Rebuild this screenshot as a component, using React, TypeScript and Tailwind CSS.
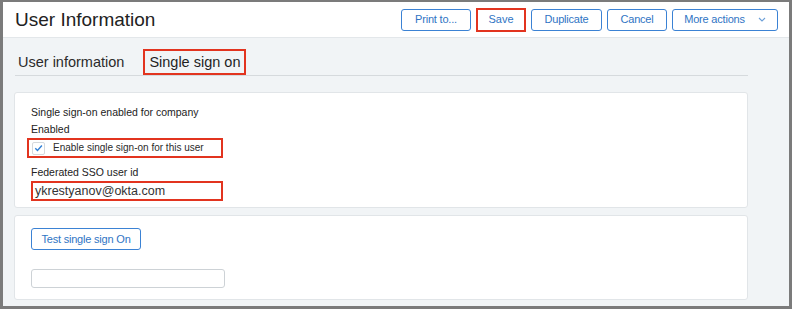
import type { ReactElement } from "react";

const blueButton = "flex h-[22px] items-center justify-center whitespace-nowrap rounded-[3px] border border-[#3b82d4] bg-white text-[11px] leading-none tracking-[-0.2px] text-[#2f74c4]";
const redBox = "border-2 border-[#e2341f]";
const labelText = "whitespace-nowrap text-[10.5px] leading-[16px] text-[#222]";

function Chevron(): ReactElement {
  return (
    <svg width="8" height="5" viewBox="0 0 8 5" className="ml-[13px]">
      <path d="M1 1l3 3 3-3" fill="none" stroke="#6b9fd8" strokeWidth="1.1" />
    </svg>
  );
}

function Check(): ReactElement {
  return (
    <svg width="12" height="12" viewBox="0 0 12 12">
      <path d="M2.5 6.3l2.4 2.4 4.8-5.4" fill="none" stroke="#2f7fd6" strokeWidth="1.5" />
    </svg>
  );
}

export default function App(): ReactElement {
  return (
    <div
      className="flex h-[309px] w-[792px] flex-col border-t-2 border-r-[3px] border-b-[3px] border-l-[3px] border-[#7b7b7b] bg-[#f1f4f6] text-[#2b2b2b]"
      style={{ fontFamily: '"Liberation Sans", Arial, sans-serif' }}
    >
      <header className="flex h-[36px] items-center justify-between border-b border-[#e3e7ea] bg-white pl-3 pr-[11px]">
        <h1 className="whitespace-nowrap text-[19px] leading-none text-[#222]">User Information</h1>
        <div className="flex items-center gap-[5px]">
          <button type="button" className={`${blueButton} w-[70px]`}>Print to...</button>
          <button type="button" className={`flex h-[24px] w-[50px] items-center justify-center bg-white text-[11px] leading-none text-[#2f74c4] ${redBox}`}>Save</button>
          <button type="button" className={`${blueButton} w-[71px]`}>Duplicate</button>
          <button type="button" className={`${blueButton} w-[60px]`}>Cancel</button>
          <button type="button" className={`${blueButton} w-[106px]`}>
            <span>More actions</span>
            <Chevron />
          </button>
        </div>
      </header>

      <div className="ml-3 mt-[11px] flex w-[733px] items-end border-b border-[#d6dadd]">
        <span className="whitespace-nowrap pb-[4px] pl-[3px] text-[14.5px] leading-[18px] text-[#2b2b2b]">User information</span>
        <span className={`ml-[19px] whitespace-nowrap px-[4px] py-[2px] text-[14.5px] leading-[18px] text-[#1f1f1f] ${redBox}`}>Single sign on</span>
      </div>

      <section className="ml-[11px] mt-[16px] flex h-[116px] w-[734px] flex-col items-start rounded-[3px] border border-[#e1e5e8] bg-white pl-4 pt-[11px]">
        <p className={labelText}>Single sign-on enabled for company</p>
        <p className={`mt-[1px] ${labelText}`}>Enabled</p>
        <label className={`-ml-[4px] mt-[1px] flex h-[20px] w-[196px] items-center ${redBox}`}>
          <span className="ml-[3px] flex h-[13px] w-[13px] items-center justify-center rounded-[2px] border border-[#d5d9dc]">
            <Check />
          </span>
          <span className="ml-[8px] whitespace-nowrap text-[10px] leading-none text-[#2b2b2b]">Enable single sign-on for this user</span>
        </label>
        <p className={`mt-[6px] ${labelText}`}>Federated SSO user id</p>
        <div className={`mt-[1px] flex h-[20px] w-[192px] items-center ${redBox}`}>
          <span className="ml-[2px] whitespace-nowrap text-[12.5px] leading-none text-[#333]">ykrestyanov@okta.com</span>
        </div>
      </section>

      <section className="ml-[11px] mt-[7px] flex h-[85px] w-[734px] flex-col items-start rounded-[3px] border border-[#e1e5e8] bg-white pl-4 pt-[12px]">
        <button type="button" className={`${blueButton} w-[110px]`}>Test single sign On</button>
        <div className="mt-[19px] h-[19px] w-[194px] rounded-[3px] border border-[#cdd2d6] bg-white" />
      </section>
    </div>
  );
}
